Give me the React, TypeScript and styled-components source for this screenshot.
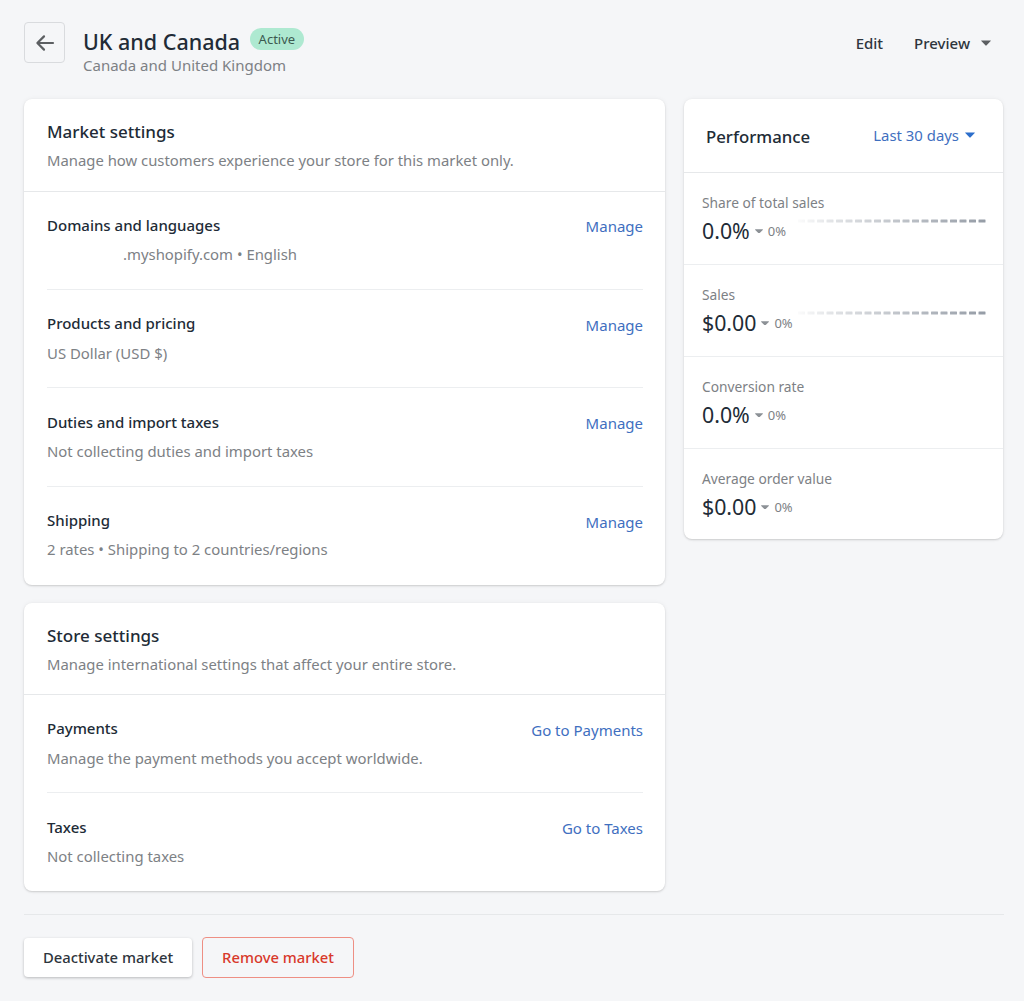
import styled, { createGlobalStyle } from "styled-components";

const GlobalStyle = createGlobalStyle`
  html, body {
    margin: 0;
    background: #f5f6f8;
  }
  body {
    font-family: "Noto Sans", "Open Sans", sans-serif;
    color: #212b36;
  }
  * {
    box-sizing: border-box;
  }
`;

type Row = { title: string; sub: string; action: string; subIndent?: boolean };
type Metric = { label: string; value: string; delta: string; spark?: boolean };

const marketRows: Row[] = [
  { title: "Domains and languages", sub: ".myshopify.com • English", action: "Manage", subIndent: true },
  { title: "Products and pricing", sub: "US Dollar (USD $)", action: "Manage" },
  { title: "Duties and import taxes", sub: "Not collecting duties and import taxes", action: "Manage" },
  { title: "Shipping", sub: "2 rates • Shipping to 2 countries/regions", action: "Manage" },
];

const storeRows: Row[] = [
  { title: "Payments", sub: "Manage the payment methods you accept worldwide.", action: "Go to Payments" },
  { title: "Taxes", sub: "Not collecting taxes", action: "Go to Taxes" },
];

const metrics: Metric[] = [
  { label: "Share of total sales", value: "0.0%", delta: "0%", spark: true },
  { label: "Sales", value: "$0.00", delta: "0%", spark: true },
  { label: "Conversion rate", value: "0.0%", delta: "0%" },
  { label: "Average order value", value: "$0.00", delta: "0%" },
];

function Caret({ color, size }: { color: string; size: number }) {
  return (
    <svg width={size} height={size * 0.6} viewBox="0 0 10 6" fill={color}>
      <path d="M0.6 0.4h8.8c.4 0 .6.4.3.7L5.4 5.5c-.2.2-.6.2-.8 0L.3 1.1C0 .8.2.4.6.4z" />
    </svg>
  );
}

function Sparkline({ id }: { id: string }) {
  const dashes = Array.from({ length: 21 }, (_, i) => 798 + i * 9.5);
  return (
    <SparkSvg width="190" height="4" viewBox="798 0 190 4">
      <defs>
        <linearGradient id={id} x1="798" x2="986" y1="0" y2="0" gradientUnits="userSpaceOnUse">
          <stop offset="0" stopColor="#959ca6" stopOpacity="0.04" />
          <stop offset="0.2" stopColor="#959ca6" stopOpacity="0.3" />
          <stop offset="1" stopColor="#959ca6" />
        </linearGradient>
      </defs>
      {dashes.map((x) => (
        <rect key={x} x={x} y="0.5" width="7" height="3" rx="0.5" fill={`url(#${id})`} />
      ))}
    </SparkSvg>
  );
}

function SettingsRows({ rows }: { rows: Row[] }) {
  return (
    <RowList>
      {rows.map((row) => (
        <SettingRow key={row.title}>
          <div>
            <RowTitle>{row.title}</RowTitle>
            <RowSub $indent={row.subIndent}>{row.sub}</RowSub>
          </div>
          <ActionLink href="#">{row.action}</ActionLink>
        </SettingRow>
      ))}
    </RowList>
  );
}

export default function App() {
  return (
    <Page>
      <GlobalStyle />
      <Header>
        <BackButton aria-label="Back">
          <svg width="20" height="20" viewBox="0 0 20 20" fill="none" stroke="#5c5f62" strokeWidth="2.2" strokeLinecap="round" strokeLinejoin="round">
            <path d="M18 10H2.6M9 3.4 2.4 10 9 16.6" />
          </svg>
        </BackButton>
        <TitleBlock>
          <TitleLine>
            <PageTitle>UK and Canada</PageTitle>
            <Badge>Active</Badge>
          </TitleLine>
          <Subtitle>Canada and United Kingdom</Subtitle>
        </TitleBlock>
        <HeaderActions>
          <HeaderAction>Edit</HeaderAction>
          <HeaderAction>
            Preview
            <Caret color="#5c5f62" size={10} />
          </HeaderAction>
        </HeaderActions>
      </Header>

      <Columns>
        <MainColumn>
          <Card>
            <CardHead>
              <CardTitle>Market settings</CardTitle>
              <CardDesc>Manage how customers experience your store for this market only.</CardDesc>
            </CardHead>
            <SettingsRows rows={marketRows} />
          </Card>
          <Card>
            <CardHead $tight>
              <CardTitle>Store settings</CardTitle>
              <CardDesc>Manage international settings that affect your entire store.</CardDesc>
            </CardHead>
            <SettingsRows rows={storeRows} />
          </Card>
        </MainColumn>

        <SideCard>
          <PerfHead>
            <PerfTitle>Performance</PerfTitle>
            <RangeButton>
              Last 30 days
              <Caret color="#2c6ecb" size={10} />
            </RangeButton>
          </PerfHead>
          {metrics.map((m, i) => (
            <MetricRow key={m.label}>
              <MetricLabel>{m.label}</MetricLabel>
              <MetricLine>
                <MetricValue>{m.value}</MetricValue>
                <Caret color="#8c9196" size={8} />
                <MetricDelta>{m.delta}</MetricDelta>
              </MetricLine>
              {m.spark && <Sparkline id={`spark-${i}`} />}
            </MetricRow>
          ))}
        </SideCard>
      </Columns>

      <Footer>
        <DefaultButton>Deactivate market</DefaultButton>
        <DangerButton>Remove market</DangerButton>
      </Footer>
    </Page>
  );
}

const Page = styled.div`
  width: 1024px;
  height: 1001px;
  padding: 22px 20px 0 24px;
  overflow: hidden;
`;

const Header = styled.header`
  display: flex;
  align-items: flex-start;
  height: 77px;
`;

const BackButton = styled.button`
  width: 41px;
  height: 41px;
  display: flex;
  align-items: center;
  justify-content: center;
  padding: 0;
  background: #f5f6f8;
  border: 1px solid #d9dbde;
  border-radius: 4px;
`;

const TitleBlock = styled.div`
  margin-left: 18px;
`;

const TitleLine = styled.div`
  display: flex;
  align-items: flex-start;
  gap: 10px;
  height: 33px;
`;

const PageTitle = styled.h1`
  margin: 0;
  font-size: 21.5px;
  line-height: 40px;
  font-weight: 500;
  color: #212b36;
`;

const Badge = styled.span`
  margin-top: 6px;
  height: 22px;
  padding: 0 8.5px;
  border-radius: 11px;
  background: #aee9d1;
  color: #3c5a50;
  font-size: 13px;
  line-height: 22px;
`;

const Subtitle = styled.div`
  font-size: 15px;
  line-height: 20px;
  color: #7d8185;
`;

const HeaderActions = styled.div`
  margin-left: auto;
  display: flex;
  gap: 31px;
  padding: 11px 13px 0 0;
`;

const HeaderAction = styled.span`
  display: flex;
  align-items: center;
  gap: 11px;
  font-size: 15px;
  line-height: 20px;
  font-weight: 500;
  color: #2e353d;
`;

const Columns = styled.div`
  display: flex;
  align-items: flex-start;
  gap: 19px;
`;

const MainColumn = styled.div`
  width: 641px;
  display: flex;
  flex-direction: column;
  gap: 18.2px;
`;

const Card = styled.section`
  background: #fff;
  border-radius: 8px;
  box-shadow: 0 0 5px rgba(23, 24, 24, 0.05), 0 1px 2px rgba(0, 0, 0, 0.15);
`;

const CardHead = styled.div<{ $tight?: boolean }>`
  padding: 20px 23px ${({ $tight }) => ($tight ? "17px" : "17.5px")};
  border-bottom: 1px solid #e6e8ea;
`;

const CardTitle = styled.h2`
  margin: 0;
  font-size: 17px;
  line-height: 26px;
  font-weight: 500;
  color: #212b36;
`;

const CardDesc = styled.p`
  margin: 2px 0 0;
  font-size: 14.85px;
  line-height: 26px;
  color: #7d8185;
`;

const RowList = styled.div`
  padding: 0 22px 0 23px;
`;

const SettingRow = styled.div`
  display: flex;
  justify-content: space-between;
  height: 98.4px;
  padding-top: 20.4px;
  border-bottom: 1px solid #eceef0;

  &:last-child {
    height: 98.1px;
    border-bottom: 0;
  }
`;

const RowTitle = styled.div`
  font-size: 15px;
  line-height: 26px;
  font-weight: 500;
  color: #212b36;
`;

const RowSub = styled.div<{ $indent?: boolean }>`
  margin-top: 3.3px;
  padding-left: ${({ $indent }) => ($indent ? "76px" : "0")};
  font-size: 14.9px;
  line-height: 26px;
  color: #7d8185;
`;

const ActionLink = styled.a`
  margin-top: 1.6px;
  font-size: 15px;
  line-height: 26px;
  color: #3f6fbf;
  text-decoration: none;
`;

const SideCard = styled(Card)`
  width: 319px;
`;

const PerfHead = styled.div`
  height: 74px;
  display: flex;
  align-items: center;
  justify-content: space-between;
  padding: 0 28px 0 22px;
  border-bottom: 1px solid #e6e8ea;
`;

const PerfTitle = styled.h2`
  margin: 2px 0 0;
  font-size: 16.8px;
  font-weight: 500;
  color: #212b36;
`;

const RangeButton = styled.span`
  display: flex;
  align-items: center;
  gap: 6px;
  margin-bottom: 1px;
  font-size: 14.9px;
  color: #3f6fbf;
`;

const MetricRow = styled.div`
  position: relative;
  height: 92px;
  padding: 19px 18px 0;
  border-bottom: 1px solid #eceef0;

  &:last-child {
    height: 90px;
    border-bottom: 0;
  }
`;

const MetricLabel = styled.div`
  font-size: 13.75px;
  line-height: 22px;
  color: #7d8185;
`;

const MetricLine = styled.div`
  display: flex;
  align-items: center;
  gap: 5px;
  margin-top: 2px;
`;

const MetricValue = styled.span`
  font-size: 21.3px;
  line-height: 30px;
  color: #212b36;
`;

const MetricDelta = styled.span`
  font-size: 13px;
  color: #7d8185;
`;

const SparkSvg = styled.svg`
  position: absolute;
  top: 46px;
  left: 114px;
`;

const Footer = styled.footer`
  margin-top: 22.5px;
  padding-top: 23px;
  border-top: 1px solid #e6e8ea;
  display: flex;
  gap: 10px;
`;

const DefaultButton = styled.button`
  height: 39px;
  width: 168px;
  font-family: inherit;
  font-size: 14.8px;
  font-weight: 500;
  color: #2e353d;
  background: #fff;
  border: 0;
  border-radius: 4px;
  box-shadow: 0 1px 3px rgba(0, 0, 0, 0.25);
`;

const DangerButton = styled.button`
  height: 41px;
  width: 152px;
  margin-top: -1px;
  font-family: inherit;
  font-size: 14.8px;
  font-weight: 500;
  color: #d8392b;
  background: #f5f6f8;
  border: 1px solid #ee8f84;
  border-radius: 4px;
`;
